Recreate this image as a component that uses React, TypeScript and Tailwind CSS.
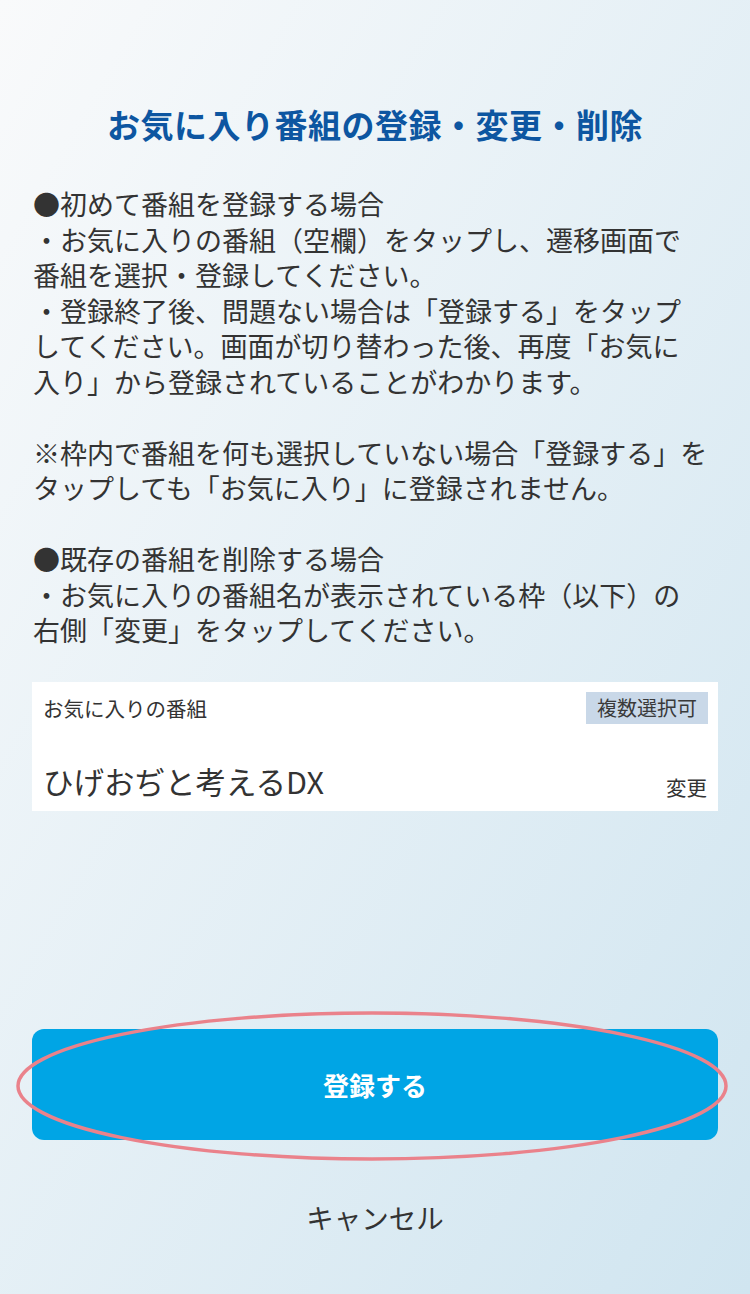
export default function App() {
  const font = { fontFamily: '"Noto Sans CJK JP", "Noto Sans", sans-serif' }

  return (
    <div
      style={font}
      className="w-[750px] h-[1294px] bg-gradient-to-br from-[#f9fafb] to-[#d0e5f0] text-[#333333] overflow-hidden"
    >
      <div className="px-[32px] pt-[104px]">
        <h1 className="text-center text-[33px] leading-[40px] font-bold text-[#0d56a1] tracking-[0.5px]">
          お気に入り番組の登録・変更・削除
        </h1>

        <div className="mt-[42px] pl-px text-[27px] leading-[35.5px] whitespace-nowrap">
          <p>●初めて番組を登録する場合</p>
          <p>・お気に入りの番組（空欄）をタップし、遷移画面で</p>
          <p>番組を選択・登録してください。</p>
          <p>・登録終了後、問題ない場合は「登録する」をタップ</p>
          <p>してください。画面が切り替わった後、再度「お気に</p>
          <p>入り」から登録されていることがわかります。</p>
          <p>&nbsp;</p>
          <p>※枠内で番組を何も選択していない場合「登録する」を</p>
          <p>タップしても「お気に入り」に登録されません。</p>
          <p>&nbsp;</p>
          <p>●既存の番組を削除する場合</p>
          <p>・お気に入りの番組名が表示されている枠（以下）の</p>
          <p>右側「変更」をタップしてください。</p>
        </div>

        {/* favourite card */}
        <div className="mt-[34px] h-[129px] bg-white px-[10px] pt-[10px] pb-[10px] flex flex-col justify-between">
          <div className="flex items-center justify-between h-[32px]">
            <span className="pl-[1px] text-[20.5px] leading-[32px]">お気に入りの番組</span>
            <span className="bg-[#c9d8e8] px-[11px] h-[32px] text-[20px] leading-[32px] text-[#3a3a3a]">
              複数選択可
            </span>
          </div>
          <div className="flex items-end justify-between">
            <span className="pl-[1px] text-[30.5px] leading-[40px]">ひげおぢと考えるDX</span>
            <span className="text-[20.5px] leading-[28px] pr-[1px]">変更</span>
          </div>
        </div>

        <div className="relative mt-[218px]">
          <button className="w-full h-[111px] rounded-[12px] bg-[#00a5e5] text-white text-[26px] font-bold">
            登録する
          </button>
          {/* pink annotation ring */}
          <svg
            className="absolute left-[-16px] top-[-18px] pointer-events-none"
            width="712"
            height="150"
            viewBox="0 0 712 150"
          >
            <ellipse cx="356" cy="75" rx="354" ry="73" fill="none" stroke="#ea828b" strokeWidth="3.5" />
          </svg>
        </div>

        <p className="mt-[57px] text-center text-[27.5px] leading-[40px]">キャンセル</p>
      </div>
    </div>
  )
}
